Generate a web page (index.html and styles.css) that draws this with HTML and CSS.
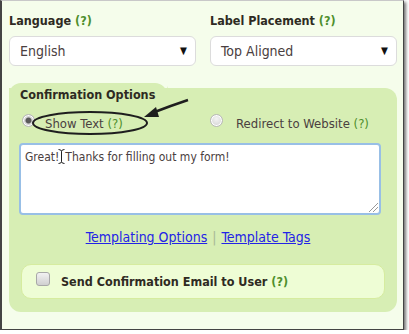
FILE: index.html
```html
<!DOCTYPE html>
<html lang="en">
<head>
    <meta charset="UTF-8">
    <title>Form Settings</title>
    <link rel="stylesheet" href="styles.css">
</head>
<body>
    <div class="frame">
        <div class="fields">
            <div class="field">
                <label class="lbl">Language <span class="help">(?)</span></label>
                <div class="select">English<span class="caret">&#9660;</span></div>
            </div>
            <div class="field">
                <label class="lbl">Label Placement <span class="help">(?)</span></label>
                <div class="select">Top Aligned<span class="caret">&#9660;</span></div>
            </div>
        </div>

        <div class="options">
            <div class="tab"></div>
            <div class="panel">
                <h3 class="heading">Confirmation Options</h3>
                <div class="radios">
                    <label class="radio"><span class="dot checked"></span><span>Show Text <span class="help">(?)</span></span></label>
                    <label class="radio second"><span class="dot"></span><span>Redirect to Website <span class="help">(?)</span></span></label>
                </div>
                <div class="textarea">Great!<svg class="ibeam" width="7" height="15" viewBox="0 0 7 15"><path d="M0.5 0.5 Q3.5 0.5 3.5 2.5 V12.5 Q3.5 14.5 0.5 14.5 M6.5 0.5 Q3.5 0.5 3.5 2.5 M6.5 14.5 Q3.5 14.5 3.5 12.5" fill="none" stroke="#222" stroke-width="1"/></svg>Thanks for filling out my form!<span class="grip"></span></div>
                <div class="links">
                    <a href="#">Templating Options</a> <span class="sep">|</span> <a href="#">Template Tags</a>
                </div>
                <div class="email">
                    <span class="check"></span>
                    <span class="email-text">Send Confirmation Email to User <span class="help">(?)</span></span>
                </div>
            </div>
        </div>

        <!-- hand drawn callout on top of the screenshot -->
        <svg class="callout" width="409" height="334" viewBox="0 0 409 334">
            <ellipse cx="90" cy="123" rx="57" ry="11" fill="none" stroke="#1e1e1e" stroke-width="2"/>
            <path d="M188 100 Q170 106 152 113" fill="none" stroke="#1e1e1e" stroke-width="2.5"/>
            <polygon points="144,117 156,107 159,117" fill="#1e1e1e"/>
        </svg>
    </div>
</body>
</html>
```

FILE: styles.css
```css
body {
    margin: 0;
    background: #fff;
    font-family: "DejaVu Sans Condensed", "DejaVu Sans", sans-serif;
    color: #2b2b2b;
}
.frame {
    position: relative;
    width: 401px;
    height: 328px;
    background: #f5fdeb;
    border: 1px solid #444;
    border-left-width: 2px;
    border-top-color: #c8c8c8;
    box-shadow: 2px 2px 3px rgba(0, 0, 0, 0.55);
}
.fields {
    display: grid;
    grid-template-columns: 187px 187px;
    column-gap: 14px;
    padding: 13px 0 0 7px;
}
.lbl {
    display: block;
    font-size: 12.5px;
    font-weight: bold;
    line-height: 14px;
    margin-bottom: 8px;
    color: #2e2a22;
}
.help {
    color: #4e8f2c;
}
.select {
    position: relative;
    height: 28px;
    line-height: 28px;
    padding-left: 10px;
    background: #fff;
    border: 1px solid #dcdcdc;
    border-radius: 6px;
    font-size: 14px;
    color: #4a4040;
}
.caret {
    position: absolute;
    right: 8px;
    top: 0;
    font-size: 10px;
    color: #111;
}

.options {
    margin: 17px 0 0 7px;
    width: 388px;
}
.tab {
    position: relative;
    width: 158px;
    height: 14px;
    background: #d7eeb4;
    border-radius: 12px 12px 0 0;
}
.tab::after {
    content: "";
    position: absolute;
    left: 158px;
    bottom: 0;
    width: 12px;
    height: 12px;
    background: radial-gradient(circle at 100% 0, transparent 11.5px, #d7eeb4 12px);
}
.panel {
    background: #d7eeb4;
    border-radius: 0 12px 12px 12px;
    padding: 0 0 13px 0;
}
.heading {
    position: relative;
    z-index: 1;
    margin: -9px 0 0 11px;
    font-size: 12.5px;
    line-height: 14px;
    font-weight: bold;
    color: #2e2a22;
}
.radios {
    display: flex;
    margin-top: 10px;
    height: 22px;
    font-size: 13px;
    color: #4a4040;
}
.radio {
    box-sizing: border-box;
    display: flex;
    align-items: center;
    width: 188px;
    padding-left: 13px;
}
.dot {
    width: 11px;
    height: 11px;
    margin: -6px 10px 0 0;
    border-radius: 50%;
    border: 1px solid #b8b8b8;
    background: radial-gradient(circle at 50% 35%, #f4f4f4, #cfcfcf);
    box-shadow: inset 0 0 0 1px #fff;
}
.radio.second .dot {
    margin-right: 13px;
}
.dot.checked {
    background: radial-gradient(circle, #5a5a5a 2.5px, #d6d6d6 3.5px, #bdbdbd);
}
.textarea {
    position: relative;
    margin: 9px 0 0 10px;
    width: 350px;
    height: 60px;
    padding: 4px 4px;
    background: #fff;
    border: 2px solid #98bfe6;
    border-radius: 4px;
    font-size: 12px;
    line-height: 14px;
    color: #4a4040;
}
.ibeam {
    vertical-align: -3px;
    margin: 0 0 0 -1px;
}
.grip {
    position: absolute;
    right: 1px;
    bottom: 1px;
    width: 9px;
    height: 9px;
    background: linear-gradient(135deg, transparent 45%, #999 45%, #999 52%, transparent 52%, transparent 70%, #999 70%, #999 77%, transparent 77%);
}
.links {
    margin-top: 14px;
    padding-right: 10px;
    text-align: center;
    font-size: 14px;
    line-height: 16px;
}
.links a {
    color: #2323e6;
}
.sep {
    color: #a8b896;
    margin: 0 1px;
}
.email {
    display: flex;
    align-items: center;
    margin: 19px 0 0 12px;
    width: 362px;
    height: 33px;
    background: #eefdd5;
    border: 1px solid #d6ec9f;
    border-radius: 10px;
}
.check {
    width: 12px;
    height: 12px;
    margin: -6px 11px 0 14px;
    border: 1px solid #a8a8a8;
    border-radius: 3px;
    background: linear-gradient(#f2f2f2, #d0d0d0);
}
.email-text {
    font-size: 12.5px;
    font-weight: bold;
    color: #2e2a22;
}
.callout {
    position: absolute;
    left: -2px;
    top: -1px;
    pointer-events: none;
}
```
